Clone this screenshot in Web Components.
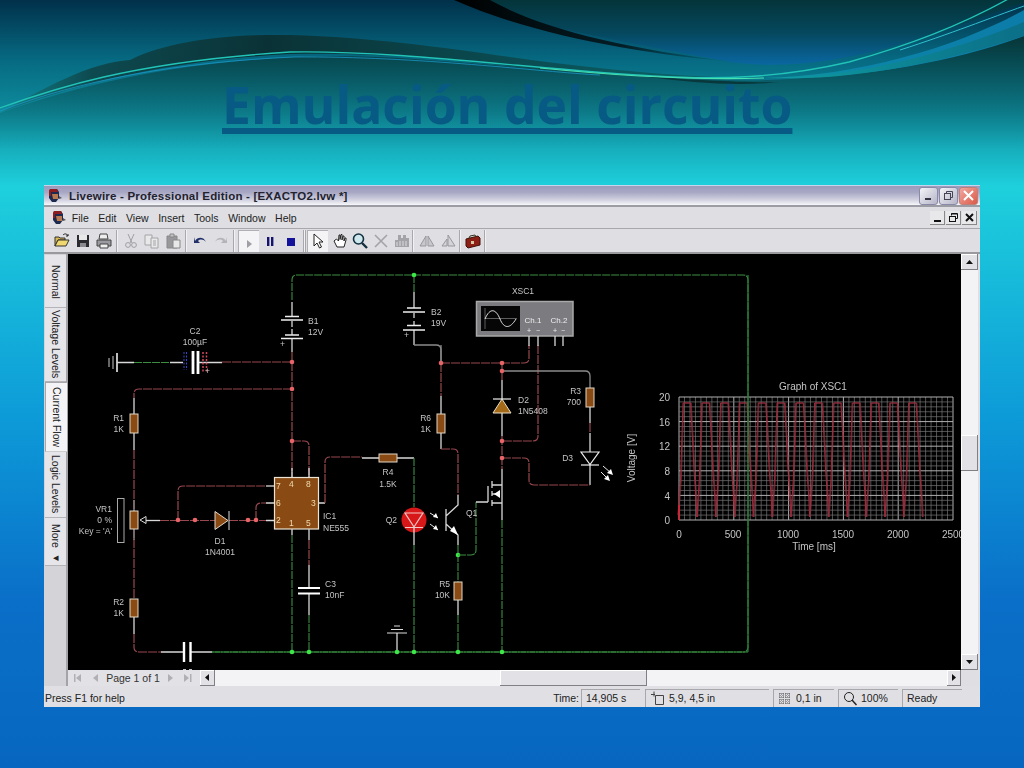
<!DOCTYPE html>
<html><head><meta charset="utf-8"><title>Emulación del circuito</title>
<style>html,body{margin:0;padding:0;width:1024px;height:768px;overflow:hidden;background:#0a6cc8}</style>
</head><body>
<x-slide>
  <span slot="title">Emulación del circuito</span>
  <x-window>
    <x-titlebar>Livewire - Professional Edition - [EXACTO2.lvw *]</x-titlebar>
    <x-menubar></x-menubar>
    <x-toolbar></x-toolbar>
    <x-workarea></x-workarea>
    <x-statusbar></x-statusbar>
  </x-window>
</x-slide>
<script>
const FONT='"Liberation Sans",Arial,sans-serif';
const appIcon=(s=16)=>`<svg width="${s}" height="${s}" viewBox="0 0 16 16"><path d="M3 1h7l2 3v6l-3 4H5L2 10V4z" fill="#1c2a50"/><path d="M3 1h7l1 3H4v4H2V3z" fill="#8c1c20"/><path d="M5 6h6v5H6z" fill="#b87850"/><path d="M12 8l3 2-3 1z" fill="#555"/></svg>`;
function def(name,html,init){customElements.define(name,class extends HTMLElement{constructor(){super();const r=this.attachShadow({mode:'open'});r.innerHTML=html;if(init)init(r,this);}});}

def('x-slide',`<style>
:host{display:block;position:relative;width:1024px;height:768px;overflow:hidden;
background:linear-gradient(180deg,#01304a 0,#066a82 60px,#0e8a9c 110px,#1ed0dc 186px,#0d9ad8 420px,#0a6fc8 600px,#0767c0 768px)}
.swoosh{position:absolute;left:0;top:0;pointer-events:none}
header{position:relative;height:185px;box-sizing:border-box;padding:72px 0 0 222px}
h1{margin:0;display:inline-block;font:700 51.6px/64px "Open Sans",sans-serif;color:#075a84;text-decoration:underline;text-decoration-thickness:6px;text-underline-offset:4px;white-space:nowrap;filter:blur(.4px)}
main{position:relative;padding-left:44px}
</style>
<svg class="swoosh" width="1024" height="190" viewBox="0 0 1024 190">
<defs>
<linearGradient id="a" gradientUnits="userSpaceOnUse" x1="0" y1="0" x2="0" y2="66"><stop offset="0" stop-color="#04343a"/><stop offset=".5" stop-color="#05485e"/><stop offset="1" stop-color="#0a68a4"/></linearGradient>
<linearGradient id="b" x1="0" y1="0" x2="1" y2="0"><stop offset="0" stop-color="#12808a"/><stop offset=".12" stop-color="#0d4a50"/><stop offset=".35" stop-color="#0a3236"/><stop offset=".7" stop-color="#0a4e54"/><stop offset="1" stop-color="#0c6a70"/></linearGradient>
<linearGradient id="c" x1="0" y1="0" x2="1" y2="0"><stop offset="0" stop-color="#109aa0"/><stop offset=".4" stop-color="#0c84a8"/><stop offset="1" stop-color="#0c7ca8"/></linearGradient>
<linearGradient id="k" x1="0" y1="0" x2="1" y2="0"><stop offset="0" stop-color="#000"/><stop offset=".6" stop-color="#041e26"/><stop offset="1" stop-color="#04343e" stop-opacity="0"/></linearGradient>
<linearGradient id="s" gradientUnits="userSpaceOnUse" x1="0" y1="36" x2="0" y2="150"><stop offset="0" stop-color="#07302e" stop-opacity=".85"/><stop offset="1" stop-color="#0a5a60" stop-opacity="0"/></linearGradient>
<linearGradient id="t" x1="0" y1="0" x2="1" y2="0"><stop offset="0" stop-color="#0e9aa0"/><stop offset="1" stop-color="#0b6f88"/></linearGradient>
</defs>
<path d="M0 113C120 70 260 50 400 58C520 66 640 78 720 80C840 84 940 58 1024 36V150H0Z" fill="url(#s)"/>
<path d="M454 0C530 25 640 45 731 62C790 70 850 60 914 40C960 26 1000 10 1024 3V0Z" fill="url(#a)"/>
<path d="M454 0H490C540 28 620 48 735 62C640 54 530 34 454 0Z" fill="url(#k)"/>
<path d="M0 113C40 90 90 62 130 60C170 40 230 34 290 35C390 38 470 52 555 63C630 72 700 78 764 78C700 82 640 78 560 72C450 58 370 52 290 54C170 60 70 85 0 113Z" fill="url(#b)"/>
<path d="M640 76C700 84 740 86 780 82C750 83 690 80 640 76Z" fill="#08383c"/>
<path d="M764 78C860 76 960 46 1024 10V36C960 60 860 80 764 78Z" fill="url(#c)"/>
<path d="M780 78C860 76 950 52 1024 22V36C950 60 860 80 780 78Z" fill="url(#t)"/>
<path d="M0 108C50 90 130 62 290 52C400 50 540 70 653 76C720 80 780 78 849 62C900 48 960 26 1010 -2" fill="none" stroke="#22c4b8" stroke-width="1.300"/>
<path d="M0 111C80 80 180 62 294 57C420 56 540 72 600 75" fill="none" stroke="#1a96c4" stroke-width=".8"/>
<path d="M900 50C950 34 990 18 1024 6" fill="none" stroke="#30c0d0" stroke-width="1"/>
<path d="M540 68C620 76 700 80 764 78" fill="none" stroke="#48e0b0" stroke-width="1.200"/>
</svg>
<header><h1><slot name="title"></slot></h1></header>
<main><slot></slot></main>`);

def('x-window',`<style>:host{display:flex;flex-direction:column;width:936px;height:522px;background:#dfdfe3;font:10.5px ${FONT};color:#111}</style><slot></slot>`);

def('x-titlebar',`<style>
:host{display:flex;align-items:center;height:22px;box-sizing:border-box;border-top:1px solid #c8d4ec;border-bottom:2px solid #9c9ca4;
background:linear-gradient(180deg,#9a9abb 0,#a9a9c6 35%,#d4d4e2 75%,#f6f6fa 100%);padding-left:3px}
.t{margin-left:6px;font:700 11.5px ${FONT};letter-spacing:.2px;color:#22222e;flex:1;white-space:nowrap}
.c{display:flex;gap:1px;padding-right:2px}
.b{width:19px;height:18px;box-sizing:border-box;border:1px solid #8a8aa8;border-radius:3px;background:linear-gradient(135deg,#f4f4f8,#b4b4c8);display:flex;align-items:center;justify-content:center}
.x{background:linear-gradient(135deg,#f0a8a0,#dc5a48);border-color:#c08078}
</style>${appIcon()}<span class="t"><slot></slot></span>
<div class="c"><div class="b"><svg width="11" height="11"><rect x="2" y="8" width="6" height="2" fill="#334"/></svg></div>
<div class="b"><svg width="11" height="11" fill="none" stroke="#445"><rect x="1.5" y="3.5" width="6" height="6"/><path d="M3.5 3.5v-2h6v6h-2"/></svg></div>
<div class="b x"><svg width="13" height="13" stroke="#fff" stroke-width="2"><path d="M2 2l9 9M11 2l-9 9"/></svg></div></div>`);

def('x-menubar',`<style>
:host{display:flex;align-items:center;height:22px;box-sizing:border-box;border-bottom:1px solid #a8a8ac;background:#dfdfe3;padding-left:7px;font:10.5px ${FONT}}
nav{display:flex;margin-left:0;color:#222}
span{display:block;padding:0 4.8px}
.c{margin-left:auto;display:flex;gap:1px;padding-right:3px}
.b{width:15px;height:14px;box-sizing:border-box;background:#e8e8ea;border-right:1px solid #888;border-bottom:1px solid #888;display:flex;align-items:center;justify-content:center}
</style>${appIcon()}<nav><span>File</span><span>Edit</span><span>View</span><span>Insert</span><span>Tools</span><span>Window</span><span>Help</span></nav>
<div class="c"><div class="b"><svg width="11" height="11"><rect x="2" y="8" width="7" height="2" fill="#111"/></svg></div>
<div class="b"><svg width="11" height="11" fill="none" stroke="#111"><rect x="1.5" y="4.5" width="6" height="5"/><path d="M3.5 3.5v-2h6v5h-2M3 2h6" /></svg></div>
<div class="b"><svg width="11" height="11" stroke="#111" stroke-width="2"><path d="M2 2l7 7M9 2l-7 7"/></svg></div></div>`);

const I=(w)=>`<svg width="18" height="18" viewBox="0 0 18 18">${w}</svg>`;
const icons={
open:I(`<path d="M2 5h4l1 1h5v2H5L2 14z" fill="#d8b850" stroke="#333"/><path d="M5 8h11l-3 6H2z" fill="#f0d870" stroke="#333"/><path d="M10 3c2-2 4-1 5 1m0-2v2h-2" fill="none" stroke="#222"/>`),
save:I(`<path d="M3 3h12v12H3z" fill="#2a2a30"/><path d="M5 3h8v5H5z" fill="#e8e8e8"/><path d="M6 11h6v4H6z" fill="#8a8a90"/>`),
print:I(`<path d="M5 2h7l1 5H4z" fill="#eee" stroke="#444"/><path d="M2 8h14v6H2z" fill="#9a9aa0" stroke="#444"/><path d="M5 12h8v4H5z" fill="#eee" stroke="#444"/>`),
cut:I(`<g fill="none" stroke="#a0a0a4"><path d="M6 2l4 9M12 2L8 11"/><circle cx="6" cy="13" r="2.4"/><circle cx="12" cy="13" r="2.4"/></g>`),
copy:I(`<g fill="#e8e8e8" stroke="#a4a4a8"><path d="M2 3h7v10H2z"/><path d="M8 6h7v10H8z"/><path d="M10 9h3M10 11h3M10 13h3" fill="none"/></g>`),
paste:I(`<path d="M3 4h10v12H3z" fill="#98989c" stroke="#888"/><path d="M6 2h4v3H6z" fill="#c4c4c8" stroke="#888"/><path d="M9 8h7v8H9z" fill="#e8e8e8" stroke="#888"/>`),
undo:I(`<path d="M4 9c3-5 9-4 11 1-3-3-6-3-8-1l2 2H3V5z" fill="#22306a"/>`),
redo:I(`<path d="M14 9c-3-5-9-4-11 1 3-3 6-3 8-1L9 11h6V5z" fill="#b4b4b8"/>`),
play:I(`<path d="M7 8l5 4-5 4z" fill="#a0a0a4"/>`),
pause:I(`<path d="M6 5h2.4v9H6zM10 5h2.4v9H10z" fill="#14146e"/>`),
stop:I(`<path d="M5 6h8v8H5z" fill="#12129a"/>`),
arrow:I(`<path d="M5 2v12l3-3 2.5 5 2-1-2.5-5h4z" fill="#fff" stroke="#222"/>`),
hand:I(`<path d="M4 9l3 6h7l2-7V6l-1 0-1 3V4l-1 0-1 4V2.500l-1 0-1 5V3l-1 0-.5 6-2-2z" fill="#fff" stroke="#222" stroke-linejoin="round"/>`),
zoom:I(`<circle cx="7.500" cy="7" r="5" fill="#cfe8ee" stroke="#123040" stroke-width="1.600"/><path d="M11 11l5 5" stroke="#123040" stroke-width="2.400"/>`),
del:I(`<path d="M3 3l12 12M15 3L3 15" stroke="#a4a4a8" stroke-width="1.600"/>`),
parts:I(`<path d="M2 15V8h3V3h3v3h2V3h3v3h3v9z" fill="#a4a4a8"/><path d="M4 10v4M7 9v5M10 9v5M13 9v5" stroke="#dcdce0"/>`),
flipa:I(`<path d="M8 4v10H2zM10 4v10h6z" fill="#c8c8cc" stroke="#98989c"/>`),
flipb:I(`<path d="M9 3l7 11H9zM8 7v7H3z" fill="#d4d4d8" stroke="#98989c"/>`),
box:I(`<path d="M2 7l12-3 2 2v7L4 16l-2-2z" fill="#8c2016" stroke="#401008"/><path d="M5 6l1-2 5-1 1 2" fill="none" stroke="#332"/><path d="M7 9h3v3H7z" fill="#d8c8a0"/>`)};
def('x-toolbar',`<style>
:host{display:flex;align-items:center;height:25px;box-sizing:border-box;background:#dfdfe3;border-bottom:2px solid #9a9a9e;padding-left:7px}
.g{display:flex;align-items:center;height:22px;padding-right:2px;margin-right:1px;border-right:1px solid #a8a8ac;box-shadow:1px 0 0 #f2f2f4}
.b{width:21px;height:22px;display:flex;align-items:center;justify-content:center}
.p{background:#f4f4f6;box-shadow:inset 1px 1px 0 #b0b0b4}
</style>
<div class="g">${['open','save','print'].map(k=>`<div class="b">${icons[k]}</div>`).join('')}</div>
<div class="g" style="padding-left:2px">${['cut','copy','paste'].map(k=>`<div class="b">${icons[k]}</div>`).join('')}</div>
<div class="g" style="padding-left:2px">${['undo','redo'].map(k=>`<div class="b">${icons[k]}</div>`).join('')}</div>
<div class="g" style="padding-left:3px"><div class="b p">${icons.play}</div><div class="b">${icons.pause}</div><div class="b">${icons.stop}</div></div>
<div class="g" style="padding-left:1px;padding-right:0;border-left:1px solid #a8a8ac"><div class="b p">${icons.arrow}</div>${['hand','zoom','del','parts'].map(k=>`<div class="b">${icons[k]}</div>`).join('')}</div>
<div class="g" style="padding-left:2px;padding-right:1px">${['flipa','flipb'].map(k=>`<div class="b">${icons[k]}</div>`).join('')}</div>
<div class="g" style="padding-left:1px;padding-right:1px">${`<div class="b">${icons.box}</div>`}</div>`);

def('x-workarea',`<style>
:host{display:grid;grid-template-columns:24px 893px 17px 2px;grid-template-rows:416px 16px;height:432px;background:#dfdfe3}
x-tabs{grid-row:1/3}
x-circuit{grid-column:2;grid-row:1}
x-vscroll{grid-column:3;grid-row:1}
x-hbar{grid-column:2;grid-row:2}
</style><x-tabs></x-tabs><x-circuit></x-circuit><x-vscroll></x-vscroll><x-hbar></x-hbar>`);

def('x-tabs',`<style>
:host{display:flex;flex-direction:column;box-sizing:border-box;padding-top:1px;font:10.5px ${FONT};color:#222;background:#d4d4d8;border-right:2px solid #a4a4a8}
div{writing-mode:vertical-rl;width:21px;box-sizing:border-box;margin-left:1px;background:#e6e6ea;border-bottom:1px solid #b4b4b8;display:flex;align-items:center;justify-content:center;white-space:nowrap}
.on{background:#f4f4f6;border-top:1px solid #a8a8ac;border-left:1px solid #a8a8ac;border-bottom:1px solid #ccc;width:22px}
</style><div style="height:53px;padding-top:2px">Normal</div><div style="height:74px">Voltage Levels</div><div class="on" style="height:70px">Current Flow</div><div style="height:66px;padding-top:0">Logic Levels</div><div style="height:48px;padding-top:4px">More ◂</div>`);

const dots=(c,a)=>a.map(([x,y])=>`<circle cx="${x}" cy="${y}" r="2.300" fill="${c}"/>`).join('');
const res=(x,y1,y2)=>`<rect x="${x-4}" y="${y1}" width="8" height="${y2-y1}" fill="#8a4a14" stroke="#e0d8c8"/>`;
const lbl=(x,y,t,a='start')=>`<text x="${x}" y="${y}" text-anchor="${a}">${t}</text>`;
function trace(off,col,w){let d='';const p=18.8;for(let i=0;i<13;i++){const x=679+i*p+off;
 d+=`${i?'L':'M'}${x-1} ${i?517:515} L${x+1.500} 480 L${x+2.500} 450 L${x+4} 403 L${x+11.500} 403 L${x+13} 430 L${x+15} 470 L${x+17} 498 L${x+17.800} 517 `;}
 return `<path d="${d}" fill="none" stroke="${col}" stroke-width="${w}"/>`;}
function graph(){let g='';
 for(let i=0;i<=50;i++){const x=679+i*5.48;g+=`<path d="M${x} 397V520" stroke="${i%10?'#757575':'#b0b0b0'}" stroke-width="${i%10?.7:1}"/>`;}
 for(let i=0;i<=25;i++){const y=397+i*4.92;g+=`<path d="M679 ${y}H953" stroke="${i%5?'#757575':'#b0b0b0'}" stroke-width="${i%5?.7:1}"/>`;}
 return g;}
def('x-circuit',`<style>
:host{display:block;background:#000;overflow:hidden}
svg{display:block;filter:blur(.35px)}
text{font:8.5px ${FONT};fill:#c4c4c4}
.r{fill:none;stroke:#98484e;stroke-width:1.200;stroke-dasharray:9 1}
.g{fill:none;stroke:#3a9040;stroke-width:1.100;stroke-dasharray:8 1}
.l{fill:none;stroke:#d8d8d8;stroke-width:1.300}
.m{fill:none;stroke:#8a8a8a;stroke-width:1.300}
.t{stroke:#eee;fill:none;stroke-width:1.600}
.p{fill:#fff}
.big text{font-size:10px}
</style>
<svg width="893" height="416" viewBox="68 254 893 416">
${graph()}
${trace(0,'#b02438',1)}${trace(.8,'#803844',.7)}
<path d="M679 505V520" stroke="#e02030" stroke-width="1.500"/>
<g class="big">${lbl(813,390,'Graph of XSC1','middle')}
${[['20',400.5],['16',425.5],['12',449.5],['8',474.5],['4',499.5],['0',523.5]].map(([t,y])=>lbl(670,y,t,'end')).join('')}
${[['0',679],['500',733],['1000',788],['1500',843],['2000',898],['2500',953]].map(([t,x])=>lbl(x,537.5,t,'middle')).join('')}
${lbl(814,549.5,'Time [ms]','middle')}
<text transform="translate(635 458) rotate(-90)" text-anchor="middle">Voltage [V]</text></g>
<path d="M292 300V280Q292 275 297 275H743Q748 275 748 280V647Q748 652 743 652H212" class="g"/>
<path d="M748 275V652" stroke="#2c7a3c" stroke-width="1.200" fill="none"/>
<path d="M292 302V316M292 321V327M292 329V335M292 338V352" class="l"/>
<path d="M285 316.500H299M281 320H303M285 335H299M281 338.500H303" class="t"/>
<path d="M292 352V477" class="r"/>
${lbl(308,324,'B1')}${lbl(308,335,'12V')}${lbl(280,347,'+')}
<path d="M109 358V367M113 356V369" stroke="#ccc" fill="none"/><path d="M117 353V372" class="t"/>
<path d="M117 362.500H134M170 362.500H183M199 362.500H222" class="l"/>
<path d="M134 362.500H170" class="g"/><path d="M222 362H292" class="r"/>
<path d="M184 352V370M186.500 352V370" stroke="#3848c8" stroke-dasharray="2 1.500" fill="none"/>
<path d="M203 352V372M206.500 352V372" stroke="#d04858" stroke-width="1.500" stroke-dasharray="2 1.500" fill="none"/>
<path d="M193 351V374M198 351V374" stroke="#fff" stroke-width="2.800" fill="none"/>
${lbl(195,334,'C2','middle')}${lbl(195,345,'100µF','middle')}${lbl(205,374,'+')}
<path d="M292 389H139Q134 389 134 394V398" class="r"/>
<path d="M134 398V414M134 433V450M134 617V634" class="l"/>
<path d="M134 450V511M134 529V599" class="r"/>
<path d="M134 634V647Q134 652 139 652H161" class="r"/>
<path d="M134 500V511M134 529V540" class="m"/>
${res(134,414,433)}${res(134,511,529)}${res(134,599,617)}
${lbl(124,421,'R1','end')}${lbl(124,432,'1K','end')}${lbl(124,605,'R2','end')}${lbl(124,616,'1K','end')}
<rect x="117.500" y="498.500" width="6.500" height="44" fill="none" stroke="#aaa"/>
<path d="M146 516.500L140 520L146 523.500Z" fill="none" stroke="#ddd"/><path d="M146 520.500H160" class="l"/>
${lbl(112,512,'VR1','end')}${lbl(112,523,'0 %','end')}${lbl(112,534,"Key = 'A'",'end')}
<path d="M160 520.500H215M229 520.500H274" class="r"/>
<path d="M215 511.500L228 520.500L215 529.500Z" fill="#8a4a14" stroke="#e0d8c8"/><path d="M229 511V530" stroke="#ddd" fill="none"/>
${lbl(220,544,'D1','middle')}${lbl(220,555,'1N4001','middle')}
<path d="M178 520V491Q178 486 183 486H266" class="r"/><path d="M266 486H274" class="l"/>
<path d="M256 520V508Q256 503 261 503H266" class="r"/><path d="M266 503H274M266 520.500H274" class="l"/>
<path d="M292 441H304Q309 441 309 446V477" class="r"/>
<path d="M292 468V477M309 468V477" class="l"/>
<rect x="274.500" y="477.500" width="44" height="51.500" fill="#8a4a14" stroke="#ece4d4" stroke-width="1.200"/>
${[[276,489,'7'],[289,487,'4'],[306,487,'8'],[276,506,'6'],[311,506,'3'],[276,523,'2'],[289,526,'1'],[306,526,'5']].map(([x,y,t])=>`<text x="${x}" y="${y}" style="fill:#f0dcb0">${t}</text>`).join('')}
${lbl(323,519,'IC1')}${lbl(323,531,'NE555')}
<path d="M292 529V535M309 529V540M319 503H325" class="l"/>
<path d="M292 535V652M309 615V652" class="g"/>
<path d="M309 540V565" class="r"/><path d="M309 565V588M309 594V615" class="l"/>
<path d="M298 588H320M298 593.500H320" stroke="#fff" stroke-width="2.200" fill="none"/>
${lbl(325,587,'C3')}${lbl(325,598,'10nF')}
<path d="M161 652H183M191 652H212" class="l"/><path d="M184 642V662M190.500 642V662" stroke="#fff" stroke-width="2.400" fill="none"/>
<path d="M183 669.500h3M189 669.500h3" stroke="#bbb"/>
<path d="M212 652H748" class="g"/>
<path d="M325 503V462Q325 457 330 457H362" class="r"/>
<path d="M362 458H379M397 458H414" class="l"/>
<rect x="379" y="454" width="18" height="8" fill="#8a4a14" stroke="#e0d8c8"/>
${lbl(388,475,'R4','middle')}${lbl(388,487,'1.5K','middle')}
<path d="M414 458V507M414 545V652" class="g"/>
<circle cx="414" cy="520" r="12.500" fill="#d81818"/>
<path d="M405 513H423L414 527Z" fill="none" stroke="#f4c8c8" stroke-width="1.200"/><path d="M405 527.500H423" stroke="#f4c8c8"/>
<path d="M414 527V545" class="l"/>
${lbl(397,523,'Q2','end')}
<path d="M430 513L438 518M430 524L438 530" stroke="#eee"/><path d="M438 518L433 517L436 513ZM438 530L433 529L436 525Z" class="p"/>
<path d="M441 345V363" class="m"/>
<path d="M441 363V396" class="r"/><path d="M441 396V414M441 433V449" class="l"/>
${res(441,414,433)}${lbl(431,421,'R6','end')}${lbl(431,432,'1K','end')}
<path d="M441 449H453Q458 449 458 454V495" class="r"/>
<path d="M458 495V505L446 516M446 509V531M446 524L458 535V545" class="l"/>
<path d="M458 535L450 531L454 526Z" class="p"/>
<path d="M458 545V582M458 615V652" class="g"/>
<path d="M458 600V615" class="l"/>${res(458,582,600)}
${lbl(450,587,'R5','end')}${lbl(450,598,'10K','end')}
${dots('#3ce848',[[458,555]])}
<path d="M458 555H471Q476 555 476 550V502" class="g"/><path d="M476 502H488M488 486V502" class="l"/>
${lbl(466,516,'Q1')}
<path d="M492 481V488M492 491V496M492 500V506M492 485H502M492 494H499M492 503H502M502 469V520" class="l"/>
<path d="M494 494L500 490V498Z" class="p"/>
<path d="M502 520V652" class="g"/>
<path d="M397 652V633" class="l"/><path d="M387 633H407M391 629.500H403M394 626H400" stroke="#ddd" fill="none"/>
<path d="M414 275V292" class="g"/><path d="M414 292V308M414 313V318M414 321V325M414 330V345" class="l"/>
<path d="M407 308H421M403 312H425M407 325.500H421M403 330H425" class="t"/>
${lbl(431,315,'B2')}${lbl(431,326,'19V')}${lbl(404,338,'+')}
<path d="M414 345H436Q441 345 441 350V363" class="m"/>
<path d="M441 363H524Q529 363 529 358V345" class="r"/>
<path d="M538 345V436Q538 441 533 441H502" class="r"/>
<path d="M502 371H585Q590 371 590 376V388" class="m"/>
<path d="M502 363V371" class="r"/>
${lbl(523,294,'XSC1','middle')}
<rect x="476.500" y="301.500" width="96.500" height="34.500" fill="#7c7c80" stroke="#a8a8a8" stroke-width="1.500"/>
<rect x="481" y="306" width="39" height="25" fill="#060606"/>
<path d="M485 308V329M485 318.500H517" stroke="#999" stroke-width=".6"/>
<path d="M485 319C490 307 496 309 500 319C504 329 510 329 516 319" fill="none" stroke="#e0e0e0"/>
<g class="scope">${[['Ch.1',533,323],['Ch.2',559,323]].map(([t,x,y])=>`<text x="${x}" y="${y}" text-anchor="middle" style="font-size:8px;fill:#eee">${t}</text>`).join('')}${[['+',529],['−',538],['+',555],['−',563]].map(([t,x])=>`<text x="${x}" y="332.500" text-anchor="middle" style="font-size:7px;fill:#eee">${t}</text>`).join('')}</g>
<path d="M529 336V346M538 336V346M555 336V346M563 336V346" class="l"/>
<path d="M502 371V380" class="r"/><path d="M502 380V436" class="l"/>
<path d="M493 399H511" stroke="#eee" stroke-width="1.200"/>
<path d="M502 399L493 413H511Z" fill="#a46a18" stroke="#e8e0c8"/>
${lbl(518,403,'D2')}${lbl(518,414,'1N5408')}
<path d="M502 436V469" class="r"/>
${res(590,388,407)}<path d="M590 407V423M590 433V452M590 464V485" class="l"/>
<path d="M590 423V433" class="r"/>
${lbl(581,394,'R3','end')}${lbl(581,405,'700','end')}
<path d="M581 452H599L590 464.500Z" fill="none" stroke="#eee" stroke-width="1.200"/><path d="M581 465H599" stroke="#eee" stroke-width="1.200"/>
${lbl(573,461,'D3','end')}
<path d="M603 466L611 473M601 472L608 479" stroke="#eee"/><path d="M613 475L607 473L611 469ZM610 481L604 479L608 475Z" class="p"/>
<path d="M502 458H524Q529 458 529 463V480Q529 485 534 485H590" class="r"/>
${dots('#e86468',[[292,362],[292,389],[292,441],[178,520],[195,520],[248,520],[256,520],[441,363],[502,363],[502,371],[502,441],[502,458]])}
${dots('#3ce848',[[414,275],[292,652],[309,652],[397,652],[414,652],[458,652],[502,652]])}
</svg>`);

def('x-vscroll',`<style>
:host{display:flex;flex-direction:column;background:#f3f3f5;height:416px}
.b{height:15px;flex:none;background:#e2e2e6;border-right:1px solid #808084;border-bottom:1px solid #808084;box-shadow:inset 1px 1px 0 #fff;display:flex;align-items:center;justify-content:center}
.th{position:relative;flex:none;height:36px;margin-top:165px;background:#e2e2e6;border-right:1px solid #808084;border-bottom:1px solid #808084;box-shadow:inset 1px 1px 0 #fff;box-sizing:border-box}
i{flex:1}
</style><div class="b"><svg width="9" height="6"><path d="M4.500 1L8 5H1z" fill="#111"/></svg></div><div class="th"></div><i></i><div class="b"><svg width="9" height="6"><path d="M4.500 5L8 1H1z" fill="#111"/></svg></div>`);

def('x-hbar',`<style>
:host{display:flex;height:16px;font:10.500px ${FONT};background:#f3f3f5}
.nav{width:132px;flex:none;display:flex;align-items:center;background:#e2e2e6;color:#333;box-sizing:border-box;padding-left:5px}
.nav span{flex:1;text-align:center;white-space:nowrap}
.b{width:14px;flex:none;background:#e2e2e6;border-right:1px solid #808084;border-bottom:1px solid #808084;box-shadow:inset 1px 1px 0 #fff;display:flex;align-items:center;justify-content:center;box-sizing:border-box}
.th{flex:none;width:147px;margin-left:285px;background:#e2e2e6;border-right:1px solid #808084;border-bottom:1px solid #808084;box-shadow:inset 1px 1px 0 #fff;box-sizing:border-box}
i{flex:1}
svg.n{flex:none}
</style><div class="nav"><svg class="n" width="12" height="10" fill="#b0b0b4"><path d="M1 1h1.500v8H1zM8 1v8L3 5z"/></svg><svg class="n" style="margin-left:6px" width="9" height="10" fill="#b0b0b4"><path d="M7 1v8L2 5z"/></svg><span>Page 1 of 1</span><svg class="n" width="9" height="10" fill="#b0b0b4"><path d="M2 1v8l5-4z"/></svg><svg class="n" style="margin:0 7px 0 6px" width="12" height="10" fill="#b0b0b4"><path d="M3 1v8l5-4zM9 1h1.500v8H9z"/></svg></div>
<div class="b" style="width:15px"><svg width="6" height="9"><path d="M1 4.500L5 1v7z" fill="#111"/></svg></div><div class="th"></div><i></i>
<div class="b"><svg width="6" height="9"><path d="M5 4.500L1 1v7z" fill="#111"/></svg></div>`);

def('x-statusbar',`<style>
:host{display:flex;align-items:center;height:21px;box-sizing:border-box;padding:2px 2px 0 1px;font:10.500px ${FONT};color:#222;background:#e0e0e4}
.h{flex:1;white-space:nowrap}
.p{height:18px;box-sizing:border-box;border-top:1px solid #a8a8ac;border-left:1px solid #a8a8ac;display:flex;align-items:center;gap:4px;padding-left:4px;margin-left:4px;white-space:nowrap}
.lb{margin-right:-2px}
</style><span class="h">Press F1 for help</span><span class="lb">Time:</span>
<div class="p" style="width:59px">14,905 s</div>
<div class="p" style="width:124px;margin-left:5px"><svg width="15" height="14" fill="none" stroke="#444"><path d="M5.500 4.500h8v9h-8zM1 3.500h4M4 .5v5"/></svg>5,9, 4,5 in</div>
<div class="p" style="width:61px"><svg width="14" height="13" stroke="#555"><path d="M1 2h12M1 5h12M1 8h12M1 11h12M2 1v11M5 1v11M8 1v11M11 1v11" stroke-dasharray="1 1"/></svg>0,1 in</div>
<div class="p" style="width:60px"><svg width="14" height="15" fill="none" stroke="#222"><circle cx="6" cy="6" r="4.500"/><path d="M9 9l4.500 5" stroke-width="1.500"/></svg>100%</div>
<div class="p" style="width:60px;margin-right:16px">Ready</div>`);
</script>
</body></html>
